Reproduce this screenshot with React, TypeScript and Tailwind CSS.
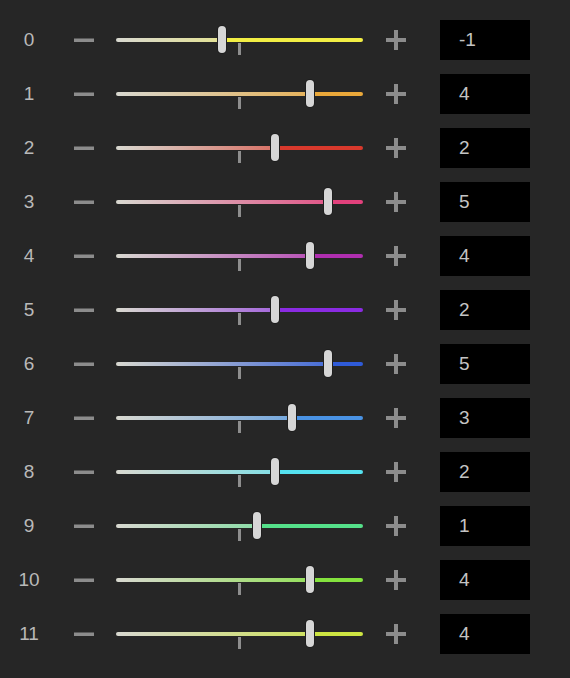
const rows: { v: number; color: string }[] = [
  { v: -1, color: '#f2ee44' },
  { v: 4, color: '#eaa83a' },
  { v: 2, color: '#d8392c' },
  { v: 5, color: '#e2417c' },
  { v: 4, color: '#b02fb0' },
  { v: 2, color: '#8a2be2' },
  { v: 5, color: '#2f5bd8' },
  { v: 3, color: '#4a93e4' },
  { v: 2, color: '#55e2f0' },
  { v: 1, color: '#55e08a' },
  { v: 4, color: '#84e23e' },
  { v: 4, color: '#cde442' },
]

const TRACK_W = 247
const GRAY = '#d8d8d0'

function Minus() {
  return (
    <svg width="20" height="20" viewBox="0 0 20 20">
      <rect x="0" y="8.5" width="20" height="3.5" fill="#8c8c8c" />
    </svg>
  )
}

function Plus() {
  return (
    <svg width="20" height="20" viewBox="0 0 20 20">
      <rect x="0" y="8" width="20" height="4" fill="#8c8c8c" />
      <rect x="8" y="0" width="4" height="20" fill="#8c8c8c" />
    </svg>
  )
}

function Slider({ v, color }: { v: number; color: string }) {
  // thumb center in track coords: zero at the middle, 17.6px per step
  const pos = 123.6 + 17.6 * v
  return (
    <div className="relative flex h-[54px] w-[247px] items-center">
      <div className="flex h-[3.5px] w-full overflow-hidden rounded-full">
        <div
          style={{
            width: pos,
            backgroundImage: `linear-gradient(to right, ${GRAY}, ${color})`,
            backgroundSize: `${TRACK_W}px 100%`,
          }}
        />
        <div className="flex-1" style={{ background: color }} />
      </div>
      {/* zero tick */}
      <div className="absolute left-[122px] top-[30px] h-[12px] w-[3px] bg-[#8e8e8e]" />
      {/* thumb */}
      <div
        className="absolute top-[13px] h-[27px] w-[8px] rounded-full bg-[#d6d6d6] ring-1 ring-[#1e1e1e]"
        style={{ left: pos - 4 }}
      />
    </div>
  )
}

export default function App() {
  return (
    <div
      className="flex min-h-screen w-[570px] flex-col bg-[#262626] pt-[13px]"
      style={{ fontFamily: '"Liberation Sans", Arial, sans-serif' }}
    >
      {rows.map((r, i) => (
        <div key={i} className="flex h-[54px] items-center">
          <div className="w-[58px] text-center text-[19px] text-[#b9b9b9]">{i}</div>
          <div className="ml-[16px] flex">
            <Minus />
          </div>
          <div className="ml-[22px]">
            <Slider v={r.v} color={r.color} />
          </div>
          <div className="ml-[23px] flex">
            <Plus />
          </div>
          <div className="ml-[34px] flex h-[40px] w-[90px] items-center bg-black pl-[19px] text-[19px] text-[#c4c4c4]">
            {r.v}
          </div>
        </div>
      ))}
    </div>
  )
}
